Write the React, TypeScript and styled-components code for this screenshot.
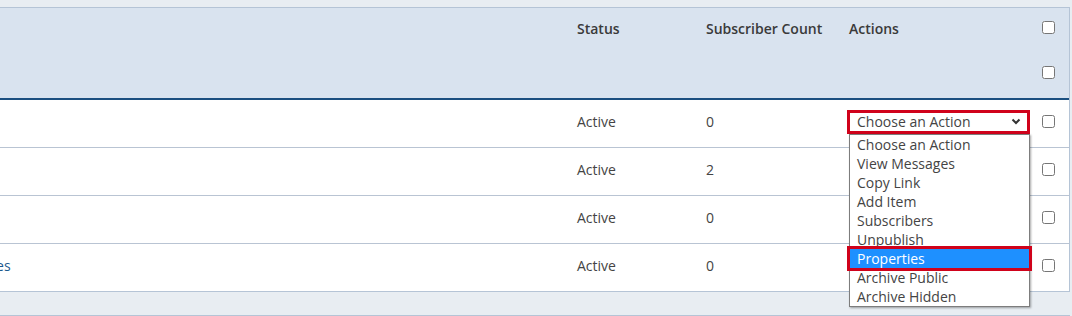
import React from 'react';
import styled, { createGlobalStyle } from 'styled-components';

const GlobalStyle = createGlobalStyle`
    body {
        margin: 0;
        background: #e8edf2;
        font-family: "Open Sans", "Liberation Sans", sans-serif;
        color: #444;
        overflow: hidden;
    }
`;

const Page = styled.div`
    padding: 7px 2px 0 0;
    overflow: hidden;
`;

const Panel = styled.div`
    margin-left: -225px;
    border: 1px solid #b5c4d6;
    border-left: none;
    background: #fff;
`;

const Table = styled.table`
    width: 100%;
    border-collapse: collapse;
    table-layout: fixed;
    font-size: 14px;
`;

// heights are given as total row height; the bottom padding nudges content up
const HeadCell = styled.th<{ $h: number; $lift?: number }>`
    background: #d9e3ef;
    height: ${p => p.$h - (p.$lift ?? 0)}px;
    padding: 0 8px ${p => p.$lift ?? 0}px;
    text-align: left;
    font-weight: 600;
    color: #3a3a3a;
    vertical-align: middle;
`;

const HeadCheckCell = styled(HeadCell)`
    padding-left: 7px;
    padding-right: 0;
`;

const HeadRow = styled.tr<{ $last?: boolean }>`
    border-bottom: ${p => (p.$last ? '2px solid #1b4f80' : 'none')};
`;

const Row = styled.tr`
    border-bottom: 1px solid #b9c4d3;
    &:last-child {
        border-bottom: none;
    }
`;

const Cell = styled.td`
    height: 43px;
    padding: 0 8px 4px;
    vertical-align: middle;
    white-space: nowrap;
`;

const TitleLink = styled.a`
    color: #1d5a8e;
    text-decoration: none;
`;

const CheckCell = styled(Cell)`
    height: 42px;
    padding: 0 0 5px 7px;
`;

const Check = styled.input.attrs({ type: 'checkbox' })`
    margin: 0;
    width: 13px;
    height: 13px;
    display: block;
`;

const ActionWrap = styled.div`
    position: relative;
    margin: 0 0 0 1px;
`;

const SelectBox = styled.div`
    display: flex;
    align-items: center;
    justify-content: space-between;
    height: 18px;
    padding: 0 6px 0 7px;
    outline: 3px solid #d0021b;
    background: #fff;
    color: #444;
    line-height: 18px;
`;

const Options = styled.ul`
    position: absolute;
    top: 21px;
    left: -1px;
    right: -3px;
    margin: 0;
    padding: 0;
    list-style: none;
    background: #fff;
    border: 1px solid #7d7d7d;
    box-shadow: 1px 1px 2px rgba(0, 0, 0, 0.35);
    z-index: 2;
`;

const Option = styled.li<{ $active?: boolean }>`
    height: 19px;
    line-height: 19px;
    padding: 0 7px;
    background: ${p => (p.$active ? '#1e90ff' : 'transparent')};
    color: ${p => (p.$active ? '#fff' : '#444')};
    outline: ${p => (p.$active ? '3px solid #d0021b' : 'none')};
    position: relative;
`;

const Below = styled.div`
    margin-top: 23px;
    border-top: 1px solid #b5c4d6;
    height: 4px;
`;

const items = [
    { title: '', status: 'Active', count: 0 },
    { title: '', status: 'Active', count: 2 },
    { title: '', status: 'Active', count: 0 },
    { title: 'Staff Announcements and Updates', status: 'Active', count: 0 },
];

const actions = [
    'Choose an Action',
    'View Messages',
    'Copy Link',
    'Add Item',
    'Subscribers',
    'Unpublish',
    'Properties',
    'Archive Public',
    'Archive Hidden',
];

const Chevron = () => (
    <svg width="10" height="7" viewBox="0 0 10 7">
        <path d="M1.5 1.5 L5 5 L8.5 1.5" fill="none" stroke="#333" strokeWidth="2" />
    </svg>
);

const App = () => (
    <Page>
        <GlobalStyle />
        <Panel>
            <Table>
                <colgroup>
                    <col style={{ width: 794 }} />
                    <col style={{ width: 129 }} />
                    <col style={{ width: 143 }} />
                    <col style={{ width: 194 }} />
                    <col style={{ width: 34 }} />
                </colgroup>
                <thead>
                    <HeadRow>
                        <HeadCell $h={41} />
                        <HeadCell $h={41}>Status</HeadCell>
                        <HeadCell $h={41}>Subscriber Count</HeadCell>
                        <HeadCell $h={41}>Actions</HeadCell>
                        <HeadCheckCell $h={41} $lift={2}>
                            <Check />
                        </HeadCheckCell>
                    </HeadRow>
                    <HeadRow $last>
                        <HeadCell $h={49} />
                        <HeadCell $h={49} />
                        <HeadCell $h={49} />
                        <HeadCell $h={49} />
                        <HeadCheckCell $h={49} $lift={3}>
                            <Check />
                        </HeadCheckCell>
                    </HeadRow>
                </thead>
                <tbody>
                    {items.map((item, i) => (
                        <Row key={i}>
                            <Cell>
                                <TitleLink href="#">{item.title}</TitleLink>
                            </Cell>
                            <Cell>{item.status}</Cell>
                            <Cell>{item.count}</Cell>
                            <Cell>
                                {i === 0 && (
                                    <ActionWrap>
                                        <SelectBox>
                                            <span>Choose an Action</span>
                                            <Chevron />
                                        </SelectBox>
                                        <Options>
                                            {actions.map(a => (
                                                <Option key={a} $active={a === 'Properties'}>
                                                    {a}
                                                </Option>
                                            ))}
                                        </Options>
                                    </ActionWrap>
                                )}
                            </Cell>
                            <CheckCell>
                                <Check />
                            </CheckCell>
                        </Row>
                    ))}
                </tbody>
            </Table>
        </Panel>
        <Below />
    </Page>
);

export default App;
